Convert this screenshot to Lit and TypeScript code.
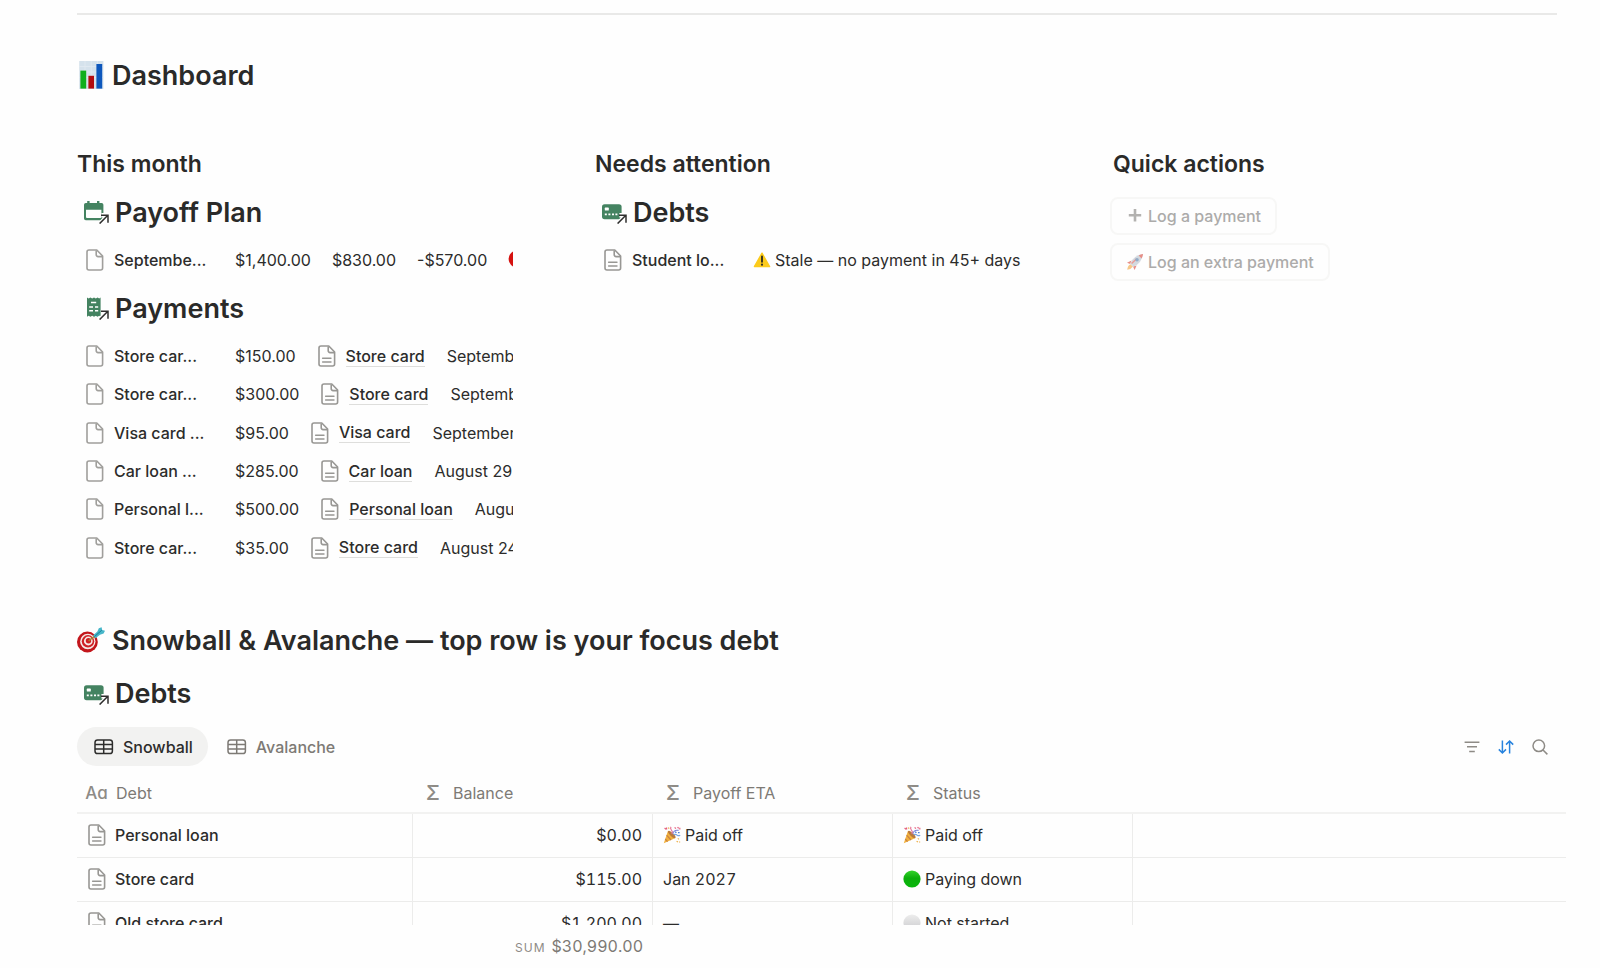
import { LitElement, html, css, svg, nothing } from "lit";
import { customElement, state, property } from "lit/decorators.js";
import { classMap } from "lit/directives/class-map.js";

const arrow = svg`
  <path d="M17.4 23.6 L24.6 15.6 M18.4 15.2 H25 V22.6" fill="none" stroke="#fff" stroke-width="4.6"/>
  <path d="M16.6 23.6 L24.6 15.4 M18 15.2 H25 V22.8" fill="none" stroke="#2f2f2e" stroke-width="1.5"/>`;

const shapes: Record<string, { w: number; h: number; body: unknown }> = {
  page: {
    w: 18, h: 22,
    body: svg`<g fill="none" stroke="#a09f9c" stroke-width="1.6" stroke-linejoin="round">
      <path d="M3 1 H10.8 L16.6 7 V19 Q16.6 21 14.6 21 H3 Q1 21 1 19 V3 Q1 1 3 1 Z"/>
      <path d="M10.2 1.4 V5.6 Q10.2 7.6 12.2 7.6 H16.4"/></g>`,
  },
  pageText: {
    w: 18, h: 22,
    body: svg`<g fill="none" stroke="#989794" stroke-width="1.6" stroke-linejoin="round">
      <path d="M3 1 H10.8 L16.6 7 V19 Q16.6 21 14.6 21 H3 Q1 21 1 19 V3 Q1 1 3 1 Z"/>
      <path d="M10.2 1.4 V5.6 Q10.2 7.6 12.2 7.6 H16.4"/>
      <path d="M4.6 13.3 H13 M4.6 17 H13" stroke-linecap="round" stroke-width="1.4"/></g>`,
  },
  calendar: {
    w: 26, h: 24,
    body: svg`<path fill="#448361" fill-rule="evenodd" d="M4.2 1 H6.6 V3 H14 V1 H16.4 V3 H18.6 Q20.4 3 20.4 4.8 V18.4 Q20.4 20.2 18.6 20.2 H2.8 Q1 20.2 1 18.4 V4.8 Q1 3 2.8 3 H4.2 Z M3 9.8 V17 Q3 18 4 18 H17.4 Q18.4 18 18.4 17 V9.8 Z"/>${arrow}`,
  },
  receipt: {
    w: 26, h: 24,
    body: svg`<path fill="#448361" d="M4 1.6 L5.6 2.6 L7.4 1.6 L9.2 2.6 L11 1.6 L12.8 2.6 L14.6 1.6 L16.2 2.6 L17.6 1.6 V20.8 L16.2 19.8 L14.6 20.8 L12.8 19.8 L11 20.8 L9.2 19.8 L7.4 20.8 L5.6 19.8 L4 20.8 Z"/>
      <path d="M8 6.4 H13.2 M6.2 11 H10 M12 11 H15.2 M6.2 14.8 H10 M12 14.8 H15.2" stroke="#fff" stroke-width="1.5"/>${arrow}`,
  },
  card: {
    w: 26, h: 24,
    body: svg`<rect x="1" y="4.2" width="19.6" height="15" rx="2.6" fill="#448361"/>
      <rect x="3.8" y="7.6" width="4" height="3" rx=".6" fill="#fff"/>
      <path d="M3.8 14.4 h2 M7.4 14.4 h2 M11 14.4 h2 M14.4 14.4 h2" stroke="#fff" stroke-width="1.9"/>${arrow}`,
  },
  chart: {
    w: 28, h: 30,
    body: svg`<rect x="2.2" y="1" width="24.2" height="28" fill="#d5e2ec"/>
      <path d="M2.2 6.5 H26.4 M2.2 12 H26.4 M2.2 17.5 H26.4 M2.2 23 H26.4 M8 1 V29 M14.2 1 V29 M20.4 1 V29" stroke="#e2ebf2" stroke-width=".8"/>
      <rect x="3.4" y="10.6" width="5.8" height="18" fill="#0faf1c"/>
      <rect x="11.4" y="15.8" width="5.6" height="12.8" fill="#b40d10"/>
      <rect x="19.4" y="4" width="5.8" height="24.6" fill="#0e58bd"/>`,
  },
  target: {
    w: 28, h: 26,
    body: svg`<circle cx="10.4" cy="15" r="10.4" fill="#c3161c"/><circle cx="10.8" cy="14.5" r="7.7" fill="#f6e9e6"/>
      <circle cx="11" cy="14.3" r="6.2" fill="#cf1f24"/><circle cx="11.3" cy="14" r="4.4" fill="#f6e9e6"/>
      <circle cx="11.5" cy="13.8" r="2.7" fill="#cf1f24"/>
      <path d="M11.6 14 L20.4 7" stroke="#a8862e" stroke-width="1.5"/>
      <path d="M16 8.6 L20.4 4.6 L21.8 1.2 L24.6 .2 L25.2 3 L28 3.8 L26.6 6.6 L23 7.8 L18.4 11.2 Z" fill="#46b6c9"/>
      <path d="M17.4 9.6 L24.8 3.2" stroke="#1c7f96" stroke-width="1"/>`,
  },
  warning: {
    w: 18, h: 18,
    body: svg`<path d="M9 2.2 L16.6 15.6 H1.4 Z" fill="#fccb1b" stroke="#fccb1b" stroke-width="1.4" stroke-linejoin="round"/>
      <path d="M9 5.4 V10.8" stroke="#33301f" stroke-width="1.9" stroke-linecap="round"/><circle cx="9" cy="13.7" r="1.1" fill="#33301f"/>`,
  },
  red: { w: 18, h: 18, body: svg`<circle cx="9" cy="8" r="8.4" fill="#d5110f"/>` },
  green: {
    w: 18, h: 18,
    body: svg`<defs><linearGradient id="g" x1="0" y1="0" x2="0" y2="1"><stop offset="0" stop-color="#35d42c"/><stop offset=".45" stop-color="#0cae0c"/><stop offset="1" stop-color="#08b70b"/></linearGradient></defs>
      <circle cx="9" cy="9" r="8.6" fill="url(#g)"/>`,
  },
  white: {
    w: 18, h: 18,
    body: svg`<defs><linearGradient id="w" x1="0" y1="0" x2="0" y2="1"><stop offset="0" stop-color="#ededed"/><stop offset="1" stop-color="#c9c9cc"/></linearGradient></defs>
      <circle cx="9" cy="9" r="8.6" fill="url(#w)"/>`,
  },
  party: {
    w: 18, h: 18,
    body: svg`<path d="M.8 17.2 L5 4.8 Q9.6 7 12.4 12 Z" fill="#f2b23c"/>
      <path d="M3.6 9.2 L8 14 M2.2 13 L4.6 15.6" stroke="#c98145" stroke-width="1.2"/>
      <ellipse cx="8.8" cy="8.5" rx="1.7" ry="5" transform="rotate(-45 8.8 8.5)" fill="#b9783c"/>
      <path d="M9 8 Q10 5.6 8.2 3.6 Q7 2.2 8 .8" stroke="#e8799a" stroke-width="1.2" fill="none"/>
      <path d="M10.6 8.6 Q13 8 14.2 9.2 Q15.6 10.2 17.2 9.2" stroke="#7aa5e2" stroke-width="1.2" fill="none"/>
      <path d="M9.8 7.6 Q11 3.4 15.6 4.4" stroke="#7f86da" stroke-width="1.1" fill="none"/>
      <path d="M1.6 2 l1.4 1.2 M3.6 1.4 v2 M11.6 1.6 l1.4 .8 M14.6 1 l1 1.4 M16.8 1.8 v1.6" stroke="#e25d7c" stroke-width="1.2"/>
      <path d="M12.2 5.8 l1.2 1 M15 6.6 h1.6" stroke="#4a7fd6" stroke-width="1.3"/>
      <path d="M14.8 12.4 l1.2 1 M13.6 15.2 l1.4 .8 M16.6 15.4 v1.2 M5.4 1.6 l.6 1.2" stroke="#efb049" stroke-width="1.2"/>`,
  },
  plus: {
    w: 18, h: 18,
    body: svg`<path d="M9 2 V14.4 M2.8 8.2 H15.2" stroke="#b3b2b0" stroke-width="2.6"/>`,
  },
  rocket: {
    w: 18, h: 18,
    body: svg`<g opacity=".6"><path d="M1.2 16.8 Q1.6 12.6 4.6 11.2 L7 13.6 Q5.2 16.4 1.2 16.8 Z" fill="#f3a43b"/>
      <path d="M5.6 7.4 L1 9.8 L4.2 11 Z M10.6 12.4 L8.6 17 L7 13.6 Z" fill="#d94438"/>
      <path d="M4.2 10.8 Q7 2.6 17 1 Q15.6 10.8 7.2 13.8 Z" fill="#b8c1cc"/>
      <path d="M12.6 2.6 Q14.8 1.2 17 1 Q16.8 3.4 15.6 5.6 Z" fill="#d94438"/>
      <path d="M5.6 10.6 L10.4 6" stroke="#e2574c" stroke-width="1.4"/>
      <circle cx="11" cy="6.8" r="1.8" fill="#4b78a6"/></g>`,
  },
  grid: {
    w: 20, h: 16,
    body: svg`<g fill="none" stroke="currentColor" stroke-width="1.5"><rect x="1" y="1" width="17.4" height="13.6" rx="2.6"/>
      <path d="M1 5.4 H18.4 M1 10 H18.4 M9.7 1 V14.6"/></g>`,
  },
  filter: {
    w: 16, h: 16,
    body: svg`<path d="M.6 3.2 H15.4 M3 7.8 H13 M5.2 12.4 H10.8" stroke="#8e8b86" stroke-width="1.5"/>`,
  },
  sort: {
    w: 16, h: 16,
    body: svg`<path d="M4.4 1.6 V14 M.8 10.4 L4.4 14 L8 10.4 M11.6 14.6 V2 M8 5.6 L11.6 2 L15.2 5.6" fill="none" stroke="#2783de" stroke-width="1.5"/>`,
  },
  search: {
    w: 16, h: 16,
    body: svg`<g fill="none" stroke="#8e8b86" stroke-width="1.5"><circle cx="6.8" cy="6.8" r="5.8"/><path d="M11 11 L15.4 15.4"/></g>`,
  },
};

const icon = (name: string, label = "") => {
  const s = shapes[name];
  return html`<svg class="icon" width=${s.w} height=${s.h} viewBox="0 0 ${s.w} ${s.h}" role=${label ? "img" : "presentation"} aria-label=${label || nothing}>${s.body}</svg>`;
};

const shared = css`
  .icon { flex: none; display: block; }
  a { color: inherit; text-decoration: none; }
  button { font: inherit; color: inherit; background: none; border: 0; padding: 0; margin: 0; cursor: pointer; }
  h2, h3, h4 { margin: 0; font-weight: 600; color: #2a2a29; }
`;

interface Payment { title: string; amount: string; debt: string; date: string; }

const payments: Payment[] = [
  { title: "Store car...", amount: "$150.00", debt: "Store card", date: "September 12" },
  { title: "Store car...", amount: "$300.00", debt: "Store card", date: "September 5" },
  { title: "Visa card ...", amount: "$95.00", debt: "Visa card", date: "September 1" },
  { title: "Car loan ...", amount: "$285.00", debt: "Car loan", date: "August 29" },
  { title: "Personal l...", amount: "$500.00", debt: "Personal loan", date: "August 28" },
  { title: "Store car...", amount: "$35.00", debt: "Store card", date: "August 24" },
];

const debts = [
  { name: "Personal loan", balance: "$0.00", etaIcon: "party", eta: "Paid off", statusIcon: "party", status: "Paid off" },
  { name: "Store card", balance: "$115.00", etaIcon: "", eta: "Jan 2027", statusIcon: "green", status: "Paying down" },
  { name: "Old store card", balance: "$1,200.00", etaIcon: "", eta: "—", statusIcon: "white", status: "Not started" },
];

@customElement("linked-title")
class LinkedTitle extends LitElement {
  @property() icon = "card";
  @property() text = "";
  static styles = [shared, css`
    :host { display: block; }
    .title { display: flex; align-items: center; gap: 6px; height: 40px; padding-left: 6px; font-size: 27px; }
  `];
  render() {
    return html`<h3 class="title">${icon(this.icon)}<a href="#">${this.text}</a></h3>`;
  }
}

@customElement("app-root")
class AppRoot extends LitElement {
  @state() view = "Snowball";

  static styles = [shared, css`
    :host { display: block; font-family: Inter, "Liberation Sans", sans-serif; font-size: 16px; color: #2c2c2b; background: #fefefe; }
    .page { box-sizing: border-box; height: 100vh; min-height: 900px; padding: 13px 34px 0 77px; display: flex; flex-direction: column; overflow: hidden; }
    .rule { flex: none; height: 2px; margin: 0 9px 0 0; border: 0; background: #e9e9e8; }
    .heading { display: flex; align-items: center; gap: 7px; height: 38px; flex: none; font-size: 27px; }
    .first { margin-top: 41px; }
    .second { margin: 54px 0 14px; }
    .columns { display: grid; grid-template-columns: repeat(3, minmax(0, 1fr)); gap: 82px; margin: 54px 17px 0 0; }
    .column { min-width: 0; display: flex; flex-direction: column; gap: 9px; }
    .clip { overflow: hidden; }
    .sub { font-size: 23px; line-height: 32px; margin-bottom: 3px; }
    .list { list-style: none; margin: 0; padding: 0; display: grid; grid-auto-rows: 1fr; }
    .six { min-height: 230px; }
    .row { min-height: 38px; display: flex; align-items: center; gap: 21px; padding-left: 9px; white-space: nowrap; }
    .name { flex: none; width: 128px; display: flex; align-items: center; gap: 10px; font-weight: 500; }
    .relation { flex: none; display: flex; align-items: center; gap: 10px; padding: 0 1px; font-weight: 500; }
    .under { border-bottom: 1px solid #dededc; line-height: 20px; }
    .mark { display: flex; align-items: center; gap: 4px; }
    .actions { display: flex; flex-direction: column; align-items: flex-start; gap: 8px; margin: 5px 0 0 -3px; }
    .action { box-sizing: border-box; height: 38px; display: flex; align-items: center; gap: 4px; padding: 0 14px; border: 2px solid #f7f7f6; border-radius: 8px; font-weight: 500; color: #acabaa; }
    .bar { flex: none; display: flex; align-items: center; justify-content: space-between; margin: 14px 18px 0 0; }
    .tabs { display: flex; gap: 2px; }
    .tab { display: flex; align-items: center; gap: 9px; height: 39px; padding: 0 15px 0 17px; border-radius: 20px; font-weight: 500; color: #7d7a75; }
    .on { background: #f2f2f1; color: #2c2c2b; }
    .tools { display: flex; gap: 18px; }
    .scroll { flex: 1; min-height: 0; margin-top: 7px; overflow: hidden; }
    .table { width: 100%; table-layout: fixed; border-collapse: separate; border-spacing: 0; font-variant-numeric: tabular-nums; }
    .wide { width: 336px; }
    .mid { width: 240px; }
    th, td { box-sizing: border-box; padding: 0 10px; text-align: left; font-weight: 400; white-space: nowrap; }
    thead th { height: 41px; color: #7d7a75; border-bottom: 2px solid #f2f2f1; }
    tbody th, tbody td { height: 44px; padding-bottom: 1px; border-bottom: 1px solid #ececeb; }
    tbody th, tbody .line { border-right: 1px solid #ececeb; }
    .cell { display: flex; align-items: center; gap: 9px; padding-left: 1px; font-weight: 500; }
    .col { display: flex; align-items: center; gap: 10px; }
    .glyph { width: 20px; flex: none; text-align: center; font-weight: 500; color: #8e8b86; }
    .aa { font-size: 17px; width: 19px; display: flex; justify-content: center; font-feature-settings: "cv11"; }
    .sigma { font-size: 20px; line-height: 24px; }
    .num { text-align: right; }
    tfoot td { position: sticky; bottom: 0; height: 43px; padding-bottom: 2px; background: #fefefe; color: #7d7a75; }
    .sum { font-size: 12px; letter-spacing: 1px; margin-right: 6px; color: #8e8b86; }
  `];

  private tab(name: string) {
    const on = this.view === name;
    return html`<button role="tab" aria-selected=${on ? "true" : "false"} class=${classMap({ tab: true, on })} @click=${() => (this.view = name)}>${icon("grid")}${name}</button>`;
  }

  private formula(name: string) {
    return html`<th scope="col"><span class="col"><span class="glyph sigma">Σ</span>${name}</span></th>`;
  }

  render() {
    return html`<main class="page">
      <hr class="rule" />
      <h2 class="heading first">${icon("chart", "Bar chart")}Dashboard</h2>
      <section class="columns">
        <div class="column clip">
          <h3 class="sub">This month</h3>
          <linked-title icon="calendar" text="Payoff Plan"></linked-title>
          <ul class="list">
            <li class="row"><a class="name" href="#">${icon("page")}Septembe...</a><span>$1,400.00</span><span>$830.00</span><span>-$570.00</span>${icon("red", "Behind")}</li>
          </ul>
          <linked-title icon="receipt" text="Payments"></linked-title>
          <ul class="list six">
            ${payments.map((p) => html`<li class="row">
              <a class="name" href="#">${icon("page")}${p.title}</a><span>${p.amount}</span>
              <a class="relation" href="#">${icon("pageText")}<span class="under">${p.debt}</span></a><span>${p.date}</span>
            </li>`)}
          </ul>
        </div>
        <div class="column">
          <h3 class="sub">Needs attention</h3>
          <linked-title icon="card" text="Debts"></linked-title>
          <ul class="list">
            <li class="row"><a class="name" href="#">${icon("pageText")}Student lo...</a><span class="mark">${icon("warning", "Warning")}Stale — no payment in 45+ days</span></li>
          </ul>
        </div>
        <div class="column">
          <h3 class="sub">Quick actions</h3>
          <div class="actions">
            <button class="action">${icon("plus")}Log a payment</button>
            <button class="action">${icon("rocket")}Log an extra payment</button>
          </div>
        </div>
      </section>
      <h2 class="heading second">${icon("target", "Target")}Snowball &amp; Avalanche — top row is your focus debt</h2>
      <linked-title icon="card" text="Debts"></linked-title>
      <div class="bar">
        <div class="tabs" role="tablist">${this.tab("Snowball")}${this.tab("Avalanche")}</div>
        <div class="tools">
          <button aria-label="Filter">${icon("filter")}</button>
          <button aria-label="Sort">${icon("sort")}</button>
          <button aria-label="Search">${icon("search")}</button>
        </div>
      </div>
      <div class="scroll">
        <table class="table">
          <colgroup><col class="wide" /><col class="mid" /><col class="mid" /><col class="mid" /><col /></colgroup>
          <thead><tr>
            <th scope="col"><span class="col"><span class="glyph aa">Aa</span>Debt</span></th>
            ${this.formula("Balance")}${this.formula("Payoff ETA")}${this.formula("Status")}<th></th>
          </tr></thead>
          <tbody>
            ${debts.map((d) => html`<tr>
              <th scope="row"><a class="cell" href="#">${icon("pageText")}${d.name}</a></th>
              <td class="line num">${d.balance}</td>
              <td class="line"><span class="mark">${d.etaIcon ? icon(d.etaIcon, "Party") : nothing}${d.eta}</span></td>
              <td class="line"><span class="mark">${icon(d.statusIcon, d.statusIcon)}${d.status}</span></td>
              <td></td>
            </tr>`)}
          </tbody>
          <tfoot><tr><td></td><td class="num"><span class="sum">SUM</span>$30,990.00</td><td></td><td></td><td></td></tr></tfoot>
        </table>
      </div>
    </main>`;
  }
}
